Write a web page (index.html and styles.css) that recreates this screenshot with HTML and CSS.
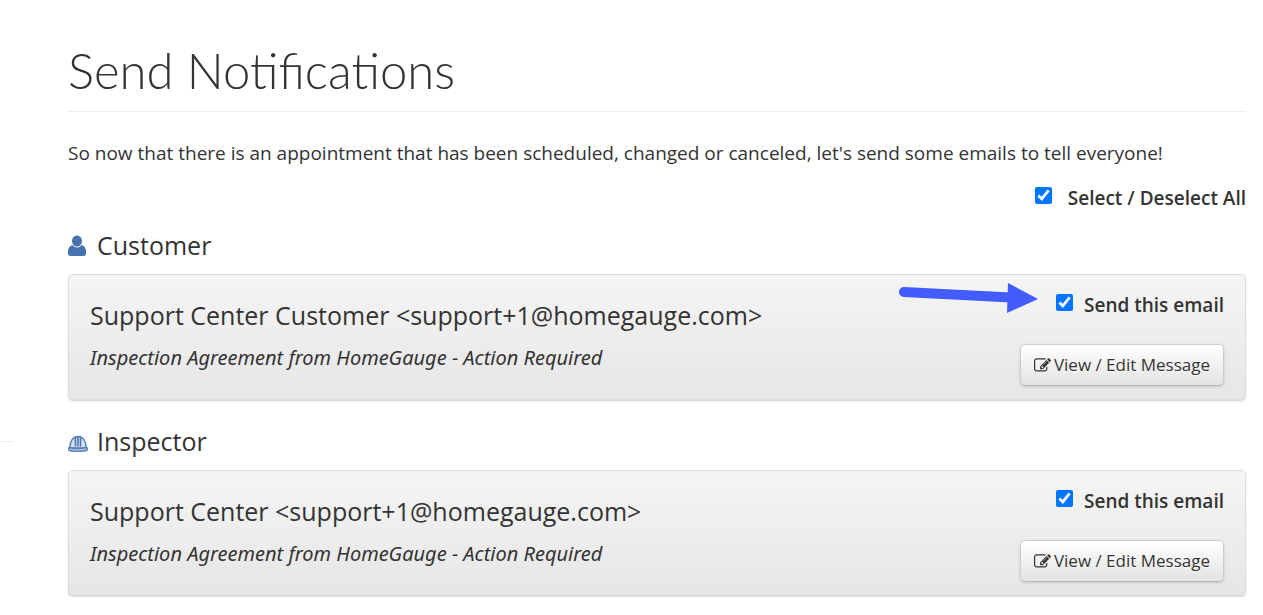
FILE: index.html
```html
<!DOCTYPE html>
<html lang="en">
<head>
<meta charset="utf-8">
<title>Send Notifications</title>
<link rel="stylesheet" href="styles.css">
</head>
<body>
<svg class="sprite" aria-hidden="true">
  <symbol id="icon-edit" viewBox="0 0 1792 1792"><path d="M888 1184l116-116-152-152-116 116v56h96v96h56zm440-720q-16-16-33 1l-350 350q-17 17-1 33t33-1l350-350q17-17 1-33zm80 594v190q0 119-84.500 203.500t-203.500 84.500h-832q-119 0-203.500-84.500t-84.500-203.500v-832q0-119 84.500-203.500t203.500-84.500h832q63 0 117 25 15 7 18 23 3 17-9 29l-49 49q-14 14-32 8-23-6-45-6h-832q-66 0-113 47t-47 113v832q0 66 47 113t113 47h832q66 0 113-47t47-113v-126q0-13 9-22l64-64q15-15 35-7t20 29zm-96-738l288 288-672 672h-288v-288zm444 132l-92 92-288-288 92-92q28-28 68-28t68 28l152 152q28 28 28 68t-28 68z"/></symbol>
</svg>
<div class="layout">
  <aside class="sidebar"><hr class="sidebar-rule"></aside>
  <main class="content">
    <h1 class="page-title">Send Notifications</h1>
    <p class="intro">So now that there is an appointment that has been scheduled, changed or canceled, let's send some emails to tell everyone!</p>
    <div class="select-all">
      <label class="check"><input type="checkbox" class="box" checked><span>Select / Deselect All</span></label>
    </div>

    <section class="group">
      <h2 class="group-title">
        <svg class="group-icon" viewBox="0 0 20 22" aria-hidden="true"><g fill="#4672ae"><ellipse cx="9" cy="7" rx="5" ry="5.500"/><path d="M4.500 11C1.500 12 0 14 0 17.500V19.500Q0 22 2.500 22h13q2.500 0 2.500-2.500V17.500c0-3.500-1.500-5.500-4.500-6.500Q11.500 13.500 9 13.500T4.500 11z"/></g></svg>
        <span>Customer</span>
      </h2>
      <div class="card">
        <div class="recipient">
          <h3 class="recipient-name">Support Center Customer &lt;support+1@homegauge.com&gt;</h3>
          <p class="subject">Inspection Agreement from HomeGauge - Action Required</p>
        </div>
        <div class="actions">
          <label class="check check-tight"><input type="checkbox" class="box" checked><span>Send this email</span>
            <svg class="pointer" viewBox="0 0 140 32" aria-hidden="true"><path d="M5 10L112 15.500" stroke="#425cff" stroke-width="10" stroke-linecap="round"/><path d="M109 1l30 16-31 14z" fill="#425cff"/></svg>
          </label>
          <button type="button" class="btn"><svg class="btn-icon" aria-hidden="true"><use href="#icon-edit"/></svg>View / Edit Message</button>
        </div>
      </div>
    </section>

    <section class="group">
      <h2 class="group-title">
        <svg class="group-icon" viewBox="0 0 20 22" aria-hidden="true"><path d="M1.800 18C1.800 11 5 6.500 10 6.500S18.200 11 18.200 18z" fill="#d3deee" stroke="#5b82b8" stroke-width="1.500"/><path d="M7.500 7.500v9M10 6.500v10M12.500 7.500v9" stroke="#4672ae" stroke-width="1.500"/><path d="M1.200 17.500q8.800 2 17.600 0 1.200 1.500 0 3-8.800 2-17.600 0-1.200-1.500 0-3z" fill="#a9bfdd" stroke="#5b82b8" stroke-width="1.300"/></svg>
        <span>Inspector</span>
      </h2>
      <div class="card">
        <div class="recipient">
          <h3 class="recipient-name">Support Center &lt;support+1@homegauge.com&gt;</h3>
          <p class="subject">Inspection Agreement from HomeGauge - Action Required</p>
        </div>
        <div class="actions">
          <label class="check check-tight"><input type="checkbox" class="box" checked><span>Send this email</span></label>
          <button type="button" class="btn"><svg class="btn-icon" aria-hidden="true"><use href="#icon-edit"/></svg>View / Edit Message</button>
        </div>
      </div>
    </section>
  </main>
</div>
</body>
</html>
```
FILE: styles.css
```css
* { box-sizing: border-box; }
body {
  margin: 0;
  background: #fff;
  color: #333;
  font-family: "Open Sans", sans-serif;
  font-size: 19px;
  line-height: 26px;
}
h1, h2, h3, p { margin: 0; }
.sprite { display: none; }
.layout { display: flex; gap: 55px; padding-right: 17px; }
.sidebar { flex: 0 0 13px; padding-top: 441px; }
.sidebar-rule { margin: 0; border: 0; border-top: 1px solid #eee; }
.content { flex: 1; min-width: 0; padding-top: 40px; }
.page-title {
  padding-bottom: 11px;
  border-bottom: 1px solid #eee;
  font-family: Lato, sans-serif;
  font-size: 49px;
  font-weight: 300;
  line-height: 60px;
}
.intro { margin-top: 28px; }
.select-all { display: flex; justify-content: flex-end; margin-top: 19px; }
.check {
  position: relative;
  display: flex;
  align-items: flex-start;
  gap: 16px;
  font-weight: 600;
}
.check-tight { gap: 11px; }
.box { width: 17px; height: 17px; margin: 2px 0 0; accent-color: #0075ff; }
.group { margin-top: 19px; }
.group + .group { margin-top: 25px; }
.group-title {
  display: flex;
  align-items: center;
  gap: 9px;
  font-size: 25px;
  font-weight: 400;
  line-height: 30px;
}
.group-icon { width: 20px; height: 22px; }
.card {
  display: flex;
  justify-content: space-between;
  margin-top: 14px;
  padding: 17px 21px 13px;
  border: 1px solid #dcdcdc;
  border-bottom-width: 2px;
  border-radius: 5px;
  background: linear-gradient(#f5f5f5, #e6e6e6);
  box-shadow: 0 1px 3px rgba(0, 0, 0, .08);
}
.recipient { padding-top: 8px; }
.recipient-name { font-size: 25px; font-weight: 400; line-height: 30px; }
.subject {
  margin-top: 15px;
  font-family: "Noto Sans", "Open Sans", sans-serif;
  font-size: 20px;
  font-style: italic;
}
.actions { display: flex; flex-direction: column; align-items: flex-end; gap: 26px; }
.pointer { position: absolute; right: 100%; top: -10px; width: 140px; height: 32px; margin-right: 17px; }
.btn {
  display: flex;
  align-items: center;
  gap: 3px;
  padding: 7px 13px;
  border: 1px solid #ccc;
  border-bottom-color: #b8b8b8;
  border-radius: 5px;
  background: linear-gradient(#fff, #e3e3e3);
  box-shadow: 0 1px 3px rgba(0, 0, 0, .15);
  color: #333;
  font-family: inherit;
  font-size: 17px;
  line-height: 26px;
  text-shadow: 0 1px 1px rgba(255, 255, 255, .75);
}
.btn-icon { width: 17px; height: 17px; fill: #333; }
```
